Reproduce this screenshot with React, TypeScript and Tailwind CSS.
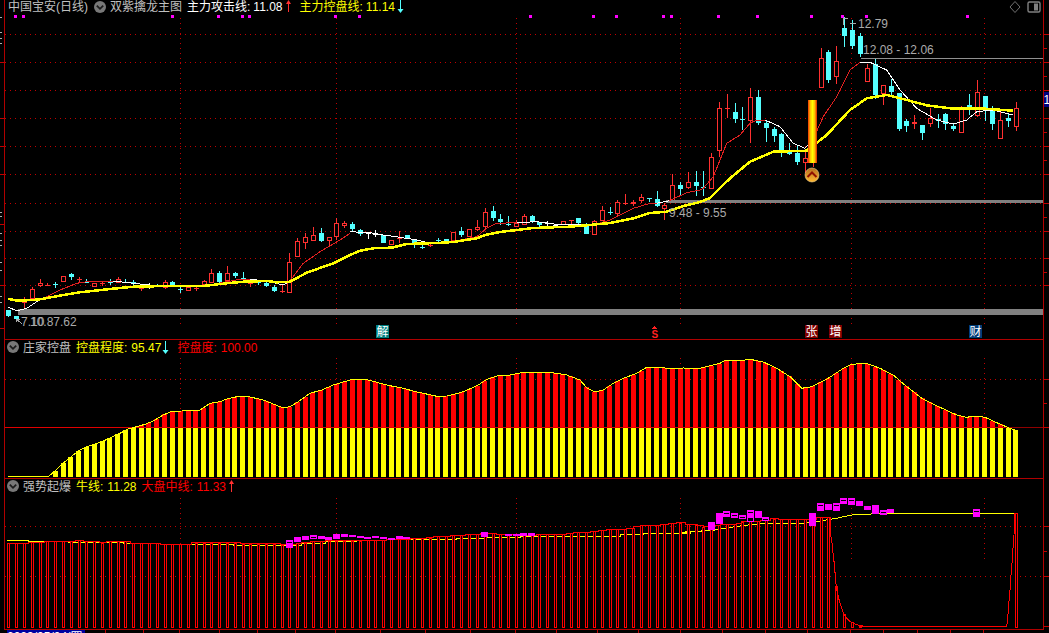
import React from "react";

type Pt = [number, number];
type C = [string, number, number, number, number];

const cx = (i: number) => 8.3 + i * 7.81;
const zm = (x0: number, y0: number, list: number[][]): Pt[] => list.map(([x, y]) => [x0 + x / 3, y0 + y / 3]);
const str = (p: Pt[]) => p.map(([x, y]) => `${x.toFixed(1)},${y.toFixed(1)}`).join(" ");
const yAt = (p: Pt[], x: number) => {
  if (x <= p[0][0]) return p[0][1];
  for (let k = 1; k < p.length; k++) {
    if (x <= p[k][0]) {
      const [a, b] = p[k - 1];
      const [c, d] = p[k];
      return c === a ? d : b + ((x - a) / (c - a)) * (d - b);
    }
  }
  return p[p.length - 1][1];
};

const segA: C[] = [
  ["c", 330, 348, 330, 350], ["c", 347, 358, 347, 362], ["r", 305, 307, 290, 325], ["r", 267, 298, 262, 300],
  ["r", 250, 258, 238, 262], ["r", 255, 256, 250, 260], ["c", 252, 253, 245, 262], ["r", 228, 245, 228, 245],
  ["c", 222, 232, 218, 238], ["r", 236, 238, 232, 248], ["c", 245, 246, 238, 250], ["r", 250, 260, 250, 260],
  ["r", 248, 249, 245, 258], ["c", 245, 246, 238, 255], ["r", 237, 248, 232, 248], ["c", 245, 246, 238, 250],
  ["c", 246, 247, 240, 258], ["r", 265, 266, 258, 272], ["w", 258, 259, 250, 268], ["c", 256, 257, 252, 262],
  ["r", 245, 265, 240, 268], ["c", 247, 254, 243, 256], ["c", 268, 269, 260, 278], ["r", 262, 272, 262, 272],
  ["r", 264, 265, 258, 272], ["r", 244, 256, 240, 256], ["r", 220, 250, 208, 250], ["c", 218, 246, 212, 250],
  ["r", 220, 244, 198, 248], ["c", 220, 228, 216, 234], ["c", 235, 236, 216, 242], ["r", 248, 249, 242, 260],
  ["c", 245, 250, 240, 255], ["c", 250, 258, 246, 260], ["c", 262, 272, 255, 275], ["r", 274, 275, 255, 278],
  ["r", 187, 280, 160, 280], ["r", 124, 170, 115, 170], ["r", 112, 130, 98, 145], ["r", 105, 122, 82, 122],
  ["c", 100, 122, 85, 128], ["r", 112, 124, 112, 140], ["r", 70, 112, 55, 120], ["r", 68, 78, 62, 82],
];
const segB: C[] = [
  ["c", 132, 148, 125, 155], ["c", 150, 162, 148, 168], ["w", 158, 159, 155, 177], ["w", 162, 163, 150, 170],
  ["c", 165, 188, 165, 188], ["r", 180, 195, 180, 195], ["r", 175, 176, 153, 188], ["c", 165, 174, 165, 176],
  ["c", 177, 195, 177, 204], ["c", 200, 201, 195, 206], ["r", 195, 196, 188, 200], ["c", 180, 181, 175, 188],
  ["c", 177, 186, 177, 186], ["r", 156, 182, 156, 190], ["c", 152, 166, 140, 170], ["r", 147, 172, 147, 172],
  ["r", 142, 150, 120, 152], ["r", 96, 140, 85, 148], ["c", 94, 115, 78, 122], ["c", 117, 127, 102, 135],
  ["c", 132, 133, 108, 138], ["r", 128, 140, 120, 140], ["r", 108, 135, 102, 135], ["c", 108, 124, 104, 128],
  ["c", 125, 135, 125, 140], ["w", 130, 131, 122, 138], ["w", 134, 135, 131, 137], ["r", 122, 135, 122, 135],
  ["r", 120, 121, 120, 135], ["c", 115, 128, 115, 135], ["c", 135, 161, 130, 161], ["r", 124, 166, 120, 166],
  ["r", 90, 122, 78, 122], ["c", 96, 97, 80, 105], ["r", 67, 102, 60, 108], ["r", 69, 70, 42, 76],
  ["r", 65, 72, 60, 78], ["r", 52, 62, 42, 68], ["c", 53, 54, 53, 65], ["c", 58, 78, 33, 80], ["r", 76, 86, 70, 122],
];
const segC: C[] = [
  ["r", 556, 602, 522, 605], ["c", 555, 567, 546, 585], ["r", 547, 563, 516, 568], ["c", 546, 558, 514, 590],
  ["c", 560, 561, 514, 590], ["r", 472, 567, 460, 567], ["r", 325, 452, 306, 470], ["r", 323, 326, 283, 355],
  ["c", 336, 356, 310, 370], ["c", 357, 359, 320, 388], ["r", 292, 362, 265, 430], ["c", 292, 368, 270, 375],
  ["c", 370, 384, 360, 425], ["c", 388, 408, 380, 425], ["c", 402, 452, 398, 470], ["c", 455, 462, 430, 465],
  ["c", 458, 486, 436, 495], ["r", 475, 488, 450, 518], ["r", 450, 455, 440, 500], ["r", 175, 263, 145, 263],
  ["c", 156, 240, 150, 248], ["r", 183, 230, 138, 252], ["c", 84, 108, 50, 140], ["c", 90, 138, 60, 148],
  ["c", 108, 162, 100, 172], ["r", 205, 245, 192, 245], ["c", 192, 285, 178, 298], ["r", 256, 282, 256, 315],
  ["c", 258, 276, 238, 290], ["c", 280, 386, 280, 395], ["c", 363, 377, 358, 396], ["r", 367, 373, 346, 388],
  ["c", 375, 398, 375, 420], ["r", 355, 371, 324, 380], ["c", 358, 364, 343, 385], ["c", 343, 372, 338, 388],
  ["c", 377, 387, 370, 395], ["r", 320, 398, 318, 400], ["c", 316, 328, 282, 345], ["r", 277, 348, 240, 350],
  ["c", 288, 325, 288, 362], ["c", 328, 372, 318, 390], ["r", 360, 416, 335, 416], ["c", 354, 362, 340, 382],
  ["r", 324, 380, 306, 392],
];

const candles = [
  ...segA.map((c) => ({ c, y0: 200 })),
  ...segB.map((c) => ({ c, y0: 180 })),
  ...segC.map((c) => ({ c, y0: 0 })),
];

const colorOf = (t: string) => (t === "r" ? "#ff3030" : t === "c" ? "#54ffff" : "#ffffff");

const yellow: Pt[] = [
  ...zm(0, 200, [[25, 296], [50, 302], [100, 300], [125, 297], [190, 285], [240, 277], [330, 267], [400, 260], [500, 258], [610, 258], [680, 250], [730, 245], [800, 243], [830, 247], [870, 245], [920, 218], [1000, 190]]),
  ...zm(350, 180, [[0, 225], [30, 212], [75, 204], [125, 203], [170, 192], [260, 189], [310, 186], [380, 175], [405, 165], [450, 156], [500, 150], [550, 144], [660, 140], [720, 135], [780, 129], [850, 115], [900, 99], [950, 95], [1000, 78], [1050, 66]]),
  ...zm(660, 0, [[150, 594], [210, 535], [270, 485], [340, 455], [440, 452], [500, 405], [570, 330], [620, 295], [680, 285], [740, 300], [800, 316], [870, 325], [960, 325], [1060, 332]]),
];

const thin: { col: string; p: Pt[] }[] = [
  { col: "#fff", p: zm(0, 200, [[25, 322], [50, 332], [80, 325], [110, 305], [125, 297]]) },
  { col: "#e02020", p: zm(0, 200, [[125, 297], [180, 270], [230, 250], [260, 245], [340, 243]]) },
  { col: "#fff", p: zm(0, 200, [[340, 243], [400, 250], [480, 258], [610, 258]]) },
  { col: "#e02020", p: zm(0, 200, [[610, 258], [680, 245], [720, 238], [750, 238]]) },
  { col: "#fff", p: zm(0, 200, [[750, 238], [800, 243], [850, 255], [868, 245]]) },
  { col: "#e02020", p: zm(0, 200, [[868, 245], [910, 190], [960, 155], [1020, 120], [1050, 100]]) },
  { col: "#fff", p: zm(350, 180, [[0, 155], [60, 158], [100, 165], [150, 172], [200, 180], [230, 187], [260, 189]]) },
  { col: "#e02020", p: zm(350, 180, [[265, 188], [330, 180], [380, 170], [410, 145], [440, 130], [500, 128]]) },
  { col: "#fff", p: zm(350, 180, [[500, 128], [560, 125], [620, 133], [700, 133], [730, 135]]) },
  { col: "#e02020", p: zm(350, 180, [[730, 135], [780, 120], [850, 85], [900, 70], [920, 70]]) },
  { col: "#fff", p: zm(350, 180, [[920, 70], [958, 62]]) },
  { col: "#e02020", p: zm(350, 180, [[958, 62], [1010, 38], [1050, 30]]) },
  { col: "#e02020", p: zm(660, 0, [[120, 570], [130, 565], [160, 530], [200, 430], [240, 405], [270, 370], [290, 360], [315, 360]]) },
  { col: "#fff", p: zm(660, 0, [[315, 360], [360, 380], [400, 430], [435, 445], [458, 420]]) },
  { col: "#e02020", p: zm(660, 0, [[458, 420], [490, 350], [530, 290], [570, 210], [600, 187]]) },
  { col: "#fff", p: zm(660, 0, [[600, 187], [630, 187], [680, 210], [720, 270], [770, 325], [830, 360], [880, 372], [920, 360], [950, 335], [1000, 330], [1060, 345]]) },
];

const topSquares = [15, 23, 172, 218, 242, 249, 335, 359, 530, 593, 616, 663, 671, 718, 757, 811, 842, 866, 967];
const vLines = [180, 336, 516, 680, 851, 984];
const hLines1 = [34, 62, 90, 118, 146, 174, 203, 231, 258, 285];

const ctrl: Pt[] = [
  ...zm(0, 335, [[25, 425], [145, 425], [165, 408], [185, 388], [210, 368], [235, 348], [260, 335], [285, 327], [310, 318], [335, 307], [360, 295], [385, 282], [410, 275], [435, 268], [460, 258], [490, 240], [515, 229], [545, 228], [570, 225], [600, 225], [630, 205], [660, 200], [680, 192], [720, 183], [750, 186], [790, 195], [820, 207], [850, 219], [870, 215], [895, 200], [930, 175], [965, 165], [1000, 150], [1050, 135]]),
  ...zm(350, 345, [[35, 102], [60, 106], [90, 115], [120, 122], [160, 130], [200, 141], [240, 149], [260, 154], [290, 153], [320, 146], [350, 136], [385, 120], [410, 103], [440, 93], [480, 90], [510, 84], [530, 82], [600, 82], [650, 90], [690, 105], [710, 128], [735, 141], [760, 135], [790, 115], [820, 100], [860, 85], [890, 67], [930, 67], [950, 70], [980, 72], [1000, 69], [1050, 70]]),
  ...zm(680, 320, [[120, 130], [135, 121], [190, 121], [210, 118], [250, 126], [290, 145], [330, 170], [365, 205], [395, 200], [440, 178], [490, 145], [510, 135], [540, 130], [565, 132], [600, 145], [640, 165], [680, 200], [730, 238], [780, 262], [830, 285], [860, 292], [885, 288], [915, 292], [950, 308], [990, 325], [1005, 330]]),
];

const steps = (x0: number, y0: number, s: number[][], endZ: number): Pt[] => {
  const out: Pt[] = [];
  s.forEach(([x, y], k) => {
    const end = k + 1 < s.length ? s[k + 1][0] : endZ;
    out.push([x0 + x / 3, y0 + y / 3], [x0 + end / 3, y0 + y / 3]);
  });
  return out;
};

const bigLine: Pt[] = [
  ...steps(0, 475, [[22, 205], [85, 201], [132, 199], [225, 196], [250, 199], [297, 203], [320, 199], [390, 204], [437, 205], [480, 207], [575, 203], [720, 206], [840, 209], [890, 205], [905, 203], [930, 199], [975, 197]], 1050),
  ...steps(350, 500, [[0, 122], [50, 120], [110, 117], [180, 115], [230, 113], [250, 109], [300, 106], [345, 103], [390, 100], [440, 103], [490, 105], [560, 103], [650, 100], [670, 97], [720, 94], [745, 91], [770, 88], [830, 85], [850, 80], [870, 76], [930, 73], [955, 70], [980, 68]], 1005),
  ...steps(680, 475, [[15, 147], [50, 150], [70, 155], [90, 150], [120, 148], [170, 145], [185, 140], [210, 138], [240, 136], [270, 131], [295, 133], [410, 127]], 450),
  ...zm(680, 475, [[450, 170], [455, 195], [458, 225], [461, 250], [464, 280], [467, 320], [470, 345], [475, 365], [480, 385], [485, 400], [490, 415], [500, 430], [510, 440], [525, 447], [540, 452], [555, 454], [980, 454], [983, 430], [986, 390], [990, 345], [993, 300], [996, 265], [999, 220], [1002, 180], [1004, 115], [1010, 115]]),
];

const niu: Pt[] = [
  ...steps(0, 475, [[22, 196], [85, 200], [155, 199], [205, 201], [370, 204], [480, 207], [600, 208], [700, 210], [850, 211], [905, 206], [975, 200]], 1050),
  ...steps(350, 500, [[0, 124], [20, 120], [110, 118], [320, 116], [410, 113], [510, 110], [740, 108], [810, 104], [880, 101], [975, 100], [1020, 96]], 990),
  ...zm(680, 475, [[0, 172], [30, 170], [100, 166], [140, 159], [180, 153], [220, 148], [260, 146], [380, 144], [420, 138], [470, 130], [510, 121], [530, 118], [570, 118], [580, 115], [1003, 115]]),
];

type M = [number, number, number, number];
const mag: M[] = [
  ...([[868, 195, 205, 1], [868, 205, 218, 0], [892, 186, 200, 0], [916, 183, 195, 0], [940, 180, 191, 1], [964, 183, 191, 0], [985, 186, 195, 0], [1009, 177, 191, 0], [1033, 177, 186, 0]] as number[][]).map(
    ([x, a, b, t]) => [x / 3, 475 + a / 3, 475 + b / 3, t] as M
  ),
  ...([[8, 105, 111, 0], [32, 108, 114, 0], [52, 111, 117, 0], [76, 108, 114, 0], [100, 111, 118, 0], [124, 114, 120, 0], [148, 108, 117, 0], [170, 111, 118, 0], [403, 96, 110, 0], [475, 102, 107, 0], [498, 102, 107, 0], [520, 99, 107, 0], [544, 99, 107, 0]] as number[][]).map(
    ([x, a, b, t]) => [350 + x / 3, 500 + a / 3, 500 + b / 3, t] as M
  ),
  ...([[95, 141, 165, 0], [118, 114, 148, 0], [139, 109, 125, 1], [163, 114, 129, 1], [187, 120, 131, 1], [211, 105, 126, 1], [211, 126, 140, 2], [235, 108, 129, 0], [257, 126, 137, 1], [397, 114, 153, 0], [421, 84, 108, 1], [445, 87, 105, 0], [469, 84, 108, 1], [490, 70, 87, 1], [514, 70, 90, 1], [538, 78, 93, 0], [562, 93, 105, 0], [586, 90, 117, 0], [610, 105, 120, 1], [631, 102, 114, 0], [889, 102, 126, 1]] as number[][]).map(
    ([x, a, b, t]) => [680 + x / 3, 475 + a / 3, 475 + b / 3, t] as M
  ),
];

const Dots = ({ x1, y1, x2, y2 }: { x1: number; y1: number; x2: number; y2: number }) => (
  <line x1={x1} y1={y1} x2={x2} y2={y2} stroke="#c00000" strokeWidth={1} strokeDasharray="1 4" />
);

const Chevron = () => (
  <svg viewBox="0 0 12 12" className="w-[12px] h-[12px] shrink-0">
    <circle cx="6" cy="6" r="6" fill="#787878" />
    <path d="M2.8 4.6 L6 7.8 L9.2 4.6" fill="none" stroke="#1c1c1c" strokeWidth="1.8" />
  </svg>
);
const Up = ({ c }: { c: string }) => (
  <svg viewBox="0 0 7 13" className="w-[7px] h-[13px] shrink-0">
    <path d="M3.5 0 L6 4 L1 4 Z" fill={c} />
    <rect x="3" y="3" width="1" height="9" fill={c} />
  </svg>
);
const Down = ({ c }: { c: string }) => (
  <svg viewBox="0 0 7 13" className="w-[7px] h-[13px] shrink-0">
    <rect x="3" y="0" width="1" height="10" fill={c} />
    <path d="M0.5 9 L6.5 9 L3.5 13 Z" fill={c} />
  </svg>
);

const Marker = ({ x, t, bg }: { x: number; t: string; bg: string }) => (
  <g>
    <rect x={x} y={325} width={13} height={13} fill={bg} />
    <text x={x + 6.5} y={336} textAnchor="middle" fontSize={12} fill="#fff">
      {t}
    </text>
  </g>
);

const MainChart = () => (
  <svg viewBox="5 15 1038 324" className="block w-[1038px] h-[324px]" shapeRendering="crispEdges">
    <defs>
      <linearGradient id="sig" x1="0" x2="1" y1="0" y2="0">
        <stop offset="0" stopColor="#f03000" />
        <stop offset="0.25" stopColor="#ffc000" />
        <stop offset="0.5" stopColor="#ffff00" />
        <stop offset="0.75" stopColor="#ffc000" />
        <stop offset="1" stopColor="#e02000" />
      </linearGradient>
      <linearGradient id="ball" x1="0" x2="0" y1="0" y2="1">
        <stop offset="0" stopColor="#b87020" />
        <stop offset="1" stopColor="#ffb830" />
      </linearGradient>
    </defs>
    {hLines1.map((y) => (
      <Dots key={y} x1={5} y1={y + 0.5} x2={1043} y2={y + 0.5} />
    ))}
    {vLines.map((x) => (
      <Dots key={x} x1={x + 0.5} y1={18} x2={x + 0.5} y2={328} />
    ))}
    {topSquares.map((x) => (
      <rect key={x} x={x - 1} y={15} width={3} height={3} fill="#ff00ff" />
    ))}
    {candles.map(({ c: [t, o, cl, h, l], y0 }, i) => {
      const x = Math.round(cx(i));
      const col = colorOf(t);
      const top = Math.round(y0 + o / 3);
      const bot = Math.max(top + 1, Math.round(y0 + cl / 3));
      return (
        <g key={i}>
          <rect x={x} y={Math.round(y0 + h / 3)} width={1} height={Math.max(1, Math.round((l - h) / 3))} fill={col} />
          {bot - top <= 1 ? (
            <rect x={x - 2} y={top} width={5} height={1} fill={col} />
          ) : t === "r" ? (
            <rect x={x - 1.5} y={top + 0.5} width={4} height={bot - top - 1} fill="#000" stroke={col} />
          ) : (
            <rect x={x - 2} y={top} width={5} height={bot - top} fill={col} />
          )}
        </g>
      );
    })}
    <rect x={18} y={309} width={1025} height={6} fill="#808080" />
    <rect x={666} y={200} width={377} height={3} fill="#808080" />
    <rect x={861} y={58} width={182} height={1} fill="#909090" />
    {thin.map((s, i) => (
      <polyline key={i} points={str(s.p)} fill="none" stroke={s.col} strokeWidth={1} />
    ))}
    <polyline points={str(yellow)} fill="none" stroke="#ffff00" strokeWidth={2.5} />
    <rect x={808} y={100} width={9} height={63} fill="url(#sig)" />
    <g shapeRendering="auto">
      <circle cx={812} cy={175} r={7} fill="url(#ball)" stroke="#f0d090" strokeWidth={0.6} />
      <path d="M807.5 177 L812 172.5 L816.5 177" fill="none" stroke="#901000" strokeWidth={2} />
    </g>
    <g fontSize={12} fill="#aaaaaa">
      <text x={858} y={28}>12.79</text>
      <text x={863} y={54}>12.08 - 12.06</text>
      <text x={669} y={217}>9.48 - 9.55</text>
      <text x={21} y={326}>7.10</text>
      <text x={30} y={326}>10.87.62</text>
    </g>
    <path d="M843.5 18 V25 M843.5 18.5 H848 M850 23.5 H856" stroke="#aaaaaa" fill="none" />
    <path d="M16.5 319 L22 324 M16.5 319 H20 M16.5 319 V322" stroke="#aaaaaa" fill="none" />
    <Marker x={376} t="解" bg="#008080" />
    <Marker x={805} t="张" bg="#800000" />
    <Marker x={829} t="增" bg="#800000" />
    <Marker x={969} t="财" bg="#003c78" />
    <path d="M654.5 326 L657.5 329 H651.5 Z" fill="#ff2020" />
    <text x={651.5} y={337.5} fontSize={10} fontWeight="bold" fill="#ff2020">S</text>
  </svg>
);

const CtrlChart = () => (
  <svg viewBox="5 355 1038 123" className="block w-[1038px] h-[123px]" shapeRendering="crispEdges">
    <Dots x1={5} y1={379.5} x2={1043} y2={379.5} />
    {vLines.map((x) => (
      <Dots key={x} x1={x + 0.5} y1={358} x2={x + 0.5} y2={428} />
    ))}
    {Array.from({ length: 130 }, (_, i) => {
      const c = cx(i);
      const top = Math.round(yAt(ctrl, c));
      if (i < 6) return null;
      const x = Math.round(c - 2.4);
      return (
        <g key={i}>
          {top < 428 && <rect x={x} y={top} width={5} height={428 - top} fill="#ff0000" />}
          <rect x={x} y={Math.max(top, 428)} width={5} height={477 - Math.max(top, 428)} fill="#ffff00" />
        </g>
      );
    })}
    <rect x={5} y={427} width={1000} height={1} fill="#e00000" />
    <rect x={1005} y={427} width={38} height={1} fill="#900000" />
    <polyline points={str(ctrl)} fill="none" stroke="#ffff00" strokeWidth={1} />
  </svg>
);

const BullChart = () => (
  <svg viewBox="5 494 1038 135" className="block w-[1038px] h-[135px]" shapeRendering="crispEdges">
    <Dots x1={5} y1={526.5} x2={1043} y2={526.5} />
    <Dots x1={5} y1={576.5} x2={1043} y2={576.5} />
    {vLines.map((x) => (
      <Dots key={x} x1={x + 0.5} y1={498} x2={x + 0.5} y2={560} />
    ))}
    <polyline points={str(niu)} fill="none" stroke="#ffff00" strokeWidth={1} />
    {Array.from({ length: 130 }, (_, i) => {
      if (i >= 110 && i < 129) return null;
      const c = cx(i);
      const top = Math.round(i === 129 ? 513 : yAt(bigLine, c));
      const x = Math.round(c) - 1;
      return <rect key={i} x={x + 0.5} y={top + 0.5} width={2} height={627 - top} fill="#000" stroke="#ff0000" />;
    })}
    <polyline points={str(bigLine)} fill="none" stroke="#ff0000" strokeWidth={1} />
    {mag.map(([x, a, b, t], i) => {
      const X = Math.round(x - 3.5);
      const A = Math.round(a);
      const B = Math.round(b);
      if (t === 2) {
        return <rect key={i} x={X + 0.5} y={A + 0.5} width={6} height={B - A - 1} fill="#000" stroke="#ff00ff" />;
      }
      return (
        <g key={i}>
          <rect x={X} y={A} width={7} height={B - A} fill="#ff00ff" />
          {t === 1 && <rect x={X + 1} y={A + 2} width={5} height={1} fill="#000" />}
        </g>
      );
    })}
  </svg>
);

const Rail = ({ long, short, w, x0 }: { long: number[]; short: number[]; w: number; x0: number }) => (
  <>
    {long.map((y) => (
      <rect key={y} x={x0} y={y} width={w} height={1} fill="#c00000" />
    ))}
    {short.map((y) => (
      <rect key={y} x={x0} y={y} width={w - 2} height={1} fill="#c00000" />
    ))}
  </>
);

export default function App() {
  return (
    <div className="w-[1049px] h-[633px] overflow-hidden bg-black flex flex-col font-['Liberation_Sans','Noto_Sans_CJK_SC',sans-serif] text-[12px] leading-[14px]">
      <div className="flex h-[630px]">
        <svg viewBox="0 0 4 630" className="block w-[4px] h-[630px] shrink-0" shapeRendering="crispEdges">
          <Rail long={[62, 118, 146, 174, 224, 285, 328]} short={[] as number[]} w={4} x0={0} />
          {[17, 32, 38, 43, 212, 216, 233, 240, 245, 262, 270, 296, 302].map((y) => (
            <rect key={y} x={0} y={y} width={2} height={1} fill="#b0b0b0" />
          ))}
        </svg>
        <div className="w-[1040px] shrink-0 border-x border-[#b00000] flex flex-col">
          <div className="h-[340px] border-b border-[#b00000]">
            <div className="h-[15px] flex items-start pl-[3px] whitespace-nowrap">
              <span className="text-[#c0c0c0]">中国宝安(日线)</span>
              <span className="ml-[6px] mt-[1px]"><Chevron /></span>
              <span className="ml-[4px] text-[#c0c0c0]">双紫擒龙主图</span>
              <span className="ml-[5px] text-white">主力攻击线:</span>
              <span className="ml-[3px] text-white">11.08</span>
              <span className="ml-[2px]"><Up c="#ff3030" /></span>
              <span className="ml-[8px] text-[#ffff00]">主力控盘线:</span>
              <span className="ml-[3px] text-[#ffff00]">11.14</span>
              <span className="ml-[2px]"><Down c="#54ffff" /></span>
              <svg viewBox="0 0 32 13" className="ml-auto mr-[2px] w-[32px] h-[13px]">
                <path d="M6 1.5 L11 7 L6 12.5 L1 7 Z" fill="none" stroke="#707070" />
                <rect x="19" y="2" width="12" height="10" rx="1.5" fill="none" stroke="#808080" strokeWidth="1.4" />
                <rect x="25" y="3.5" width="4" height="7" fill="#808080" />
              </svg>
            </div>
            <MainChart />
          </div>
          <div className="h-[139px] border-b border-[#b00000]">
            <div className="h-[15px] pt-[1px] flex items-start pl-[2px] whitespace-nowrap">
              <Chevron />
              <span className="ml-[4px] text-[#c0c0c0]">庄家控盘</span>
              <span className="ml-[5px] text-[#ffff00]">控盘程度:</span>
              <span className="ml-[4px] text-[#ffff00]">95.47</span>
              <span className="ml-[1px]"><Down c="#54ffff" /></span>
              <span className="ml-[8px] text-[#ff0000]">控盘度:</span>
              <span className="ml-[4px] text-[#ff0000]">100.00</span>
            </div>
            <CtrlChart />
          </div>
          <div className="h-[151px] border-b border-[#b00000]">
            <div className="h-[15px] pt-[1px] flex items-start pl-[2px] whitespace-nowrap">
              <Chevron />
              <span className="ml-[4px] text-[#c0c0c0]">强势起爆</span>
              <span className="ml-[5px] text-[#ffff00]">牛线:</span>
              <span className="ml-[4px] text-[#ffff00]">11.28</span>
              <span className="ml-[5px] text-[#ff0000]">大盘中线:</span>
              <span className="ml-[4px] text-[#ff0000]">11.33</span>
              <span className="ml-[2px]"><Up c="#ff3030" /></span>
            </div>
            <BullChart />
          </div>
        </div>
        <svg viewBox="0 0 5 630" className="block w-[5px] h-[630px] shrink-0" shapeRendering="crispEdges">
          <Rail
            long={[34, 62, 90, 118, 146, 174, 203, 231, 258, 285, 379, 427, 526, 576, 626]}
            short={[48, 76, 132, 160, 217, 272, 403, 551]}
            w={5}
            x0={0}
          />
          <rect x={0} y={92} width={5} height={15} fill="#000080" />
          <text x={-0.5} y={104} fontSize={12} fill="#ffffff">1</text>
        </svg>
      </div>
      <div className="h-[3px] flex">
        <div className="ml-[7px] w-[78px] h-[3px] overflow-hidden bg-[#0000a0] text-white text-[12px] leading-[14px] shrink-0">
          2023/05/04/四
        </div>
        <svg viewBox="85 630 964 3" className="block w-[964px] h-[3px]" shapeRendering="crispEdges">
          {[105, 143, 179, 219, 257, 295, 335, 380, 425, 470, 515, 556, 597, 638, 680, 722, 765, 807, 850, 883, 917, 950, 983].map((x) => (
            <rect key={x} x={x} y={630} width={1} height={3} fill="#c00000" />
          ))}
        </svg>
      </div>
    </div>
  );
}
